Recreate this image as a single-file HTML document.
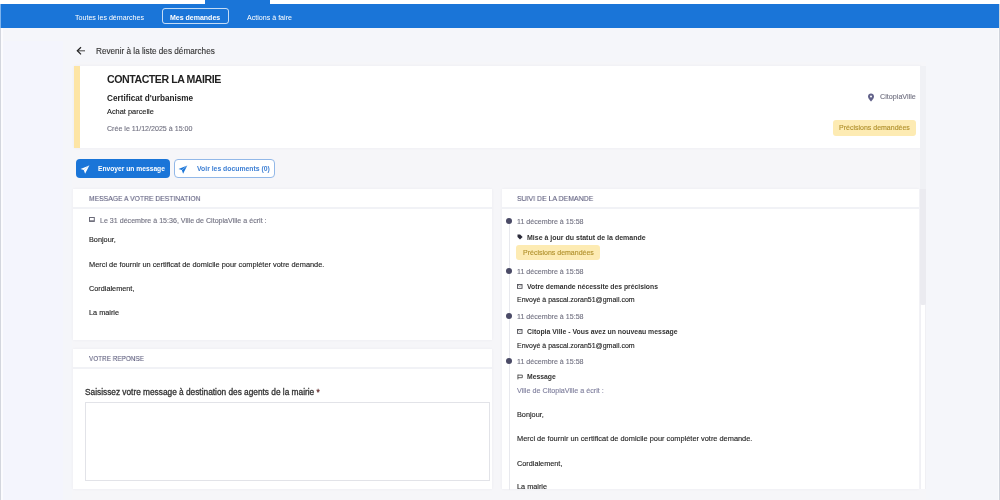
<!DOCTYPE html>
<html><head><meta charset="utf-8">
<style>
*{box-sizing:border-box;margin:0;padding:0}
html,body{width:1000px;height:500px;overflow:hidden}
body{background:#f5f6fa;font-family:"Liberation Sans",sans-serif;color:#222;position:relative}
.a{position:absolute}
.t{position:absolute;white-space:nowrap;line-height:12px;height:12px;will-change:transform;-webkit-text-stroke:.12px currentColor}
.b{font-weight:bold;-webkit-text-stroke:0}
.ns{-webkit-text-stroke:0}
#topstrip{left:0;top:0;width:1000px;height:4px;background:#fff}
#toptab{left:205px;top:0;width:65px;height:4px;background:#1a75d8}
#nav{left:0;top:4px;width:999px;height:24px;background:#1a75d8}
#rb{left:999px;top:4px;width:1px;height:496px;background:#cfd3db}
#rb2{}
.card{position:absolute;background:#fff;box-shadow:0 0 3px rgba(40,40,90,.05)}
.hd{position:absolute;left:0;right:0;top:0;height:20px;border-bottom:2px solid #f1f2f6}
.muted{color:#727282}
.sec{color:#5e5e7e}
.dot{left:506px;width:6px;height:6px;border-radius:50%;background:#4a4a66}
</style></head><body>
<div class="a" id="topstrip"></div>
<div class="a" id="toptab"></div>
<div class="a" id="nav"></div>
<div class="a" style="left:0;top:4px;width:1px;height:496px;background:#d3d6de"></div>
<div class="a" style="left:0;top:4px;width:1px;height:24px;background:#7fb4ee"></div>
<div class="a" style="left:1px;top:28px;width:2px;height:472px;background:#fbfbfe"></div>
<div class="a" style="left:998px;top:28px;width:1px;height:472px;background:#fafbfd"></div>
<div class="a" id="rb"></div>
<div class="a" style="left:72px;top:62px;width:854px;height:438px;background:#f6f6f9"></div>
<div class="a" style="left:3px;top:41px;width:60px;height:459px;background:#f4f5fd"></div>

<!-- nav -->
<div class="t ns" style="left:75px;top:12px;color:#fff;font-size:7.1px">Toutes les démarches</div>
<div class="a" style="left:162px;top:8px;width:67px;height:16px;border:1px solid rgba(255,255,255,.75);border-radius:3px"></div>
<div class="t b" style="left:170px;top:12px;color:#fff;font-size:7px">Mes demandes</div>
<div class="t ns" style="left:247px;top:12px;color:#fff;font-size:7.1px">Actions à faire</div>

<!-- back link -->
<svg class="a" style="left:76px;top:46px" width="10" height="10" viewBox="0 0 10 10"><path d="M9 4.8H1.8" fill="none" stroke="#555" stroke-width="1.1"/><path d="M5 1.2L1.3 4.8 5 8.4" fill="none" stroke="#222" stroke-width="1.2"/></svg>
<div class="t" style="left:96px;top:46.2px;color:#333;font-size:8.2px">Revenir à la liste des démarches</div>

<!-- header card -->
<div class="card" style="left:74px;top:66px;width:847px;height:82px;border-left:6px solid #fde5a5"></div>
<div class="t b" style="left:107px;top:73px;font-size:10.6px;letter-spacing:-.45px">CONTACTER LA MAIRIE</div>
<div class="t b" style="left:107px;top:92.7px;font-size:8.2px">Certificat d'urbanisme</div>
<div class="t" style="left:107px;top:105.7px;font-size:7.4px">Achat parcelle</div>
<div class="t muted" style="left:107px;top:123px;font-size:7.1px">Crée le 11/12/2025 à 15:00</div>
<svg class="a" style="left:867px;top:93px" width="8" height="9" viewBox="0 0 8 9"><path d="M4 .6C2.3.6 1 1.9 1 3.5 1 5.6 4 8.6 4 8.6S7 5.6 7 3.5C7 1.9 5.7.6 4 .6z" fill="#62628a"/><circle cx="4" cy="3.5" r="1" fill="#fff"/></svg>
<div class="t muted" style="left:880px;top:90.5px;font-size:7.2px">CitopiaVille</div>
<div class="a" style="left:833px;top:120px;width:83px;height:15.5px;background:#fdebb3;border-radius:3px"></div>
<div class="t" style="left:839px;top:122.4px;font-size:7px;color:#b0902c">Précisions demandées</div>

<!-- buttons -->
<div class="a" style="left:76px;top:158.5px;width:94px;height:19px;background:#1a75d8;border-radius:4px"></div>
<svg class="a" style="left:79.5px;top:164.5px" width="10" height="9" viewBox="0 0 10 9"><path d="M9.3.4L.5 3.9l3.3 1.2 1.3 3.6z" fill="#fff"/><path d="M9.3.4L3.8 5.1" stroke="#9cc3f0" stroke-width=".5"/></svg>
<div class="t b" style="left:98px;top:162.5px;font-size:6.7px;color:#fff">Envoyer un message</div>
<div class="a" style="left:174px;top:158.5px;width:101px;height:19px;background:#fff;border:1px solid #92b8e8;border-radius:4px"></div>
<svg class="a" style="left:177.5px;top:164.5px" width="10" height="9" viewBox="0 0 10 9"><path d="M9.3.4L.5 3.9l3.3 1.2 1.3 3.6z" fill="#1a75d8"/><path d="M9.3.4L3.8 5.1" stroke="#fff" stroke-width=".4"/></svg>
<div class="t b" style="left:196.5px;top:162.5px;font-size:6.85px;color:#3d7fd4">Voir les documents (0)</div>

<!-- message card -->
<div class="card" style="left:73px;top:189px;width:419px;height:151px"><div class="hd"></div></div>
<div class="t sec" style="left:89px;top:192.7px;font-size:8px;transform:scaleX(.848);transform-origin:0 0">MESSAGE A VOTRE DESTINATION</div>
<div class="t muted" style="left:99.5px;top:215px;font-size:7.1px">Le 31 décembre à 15:36, Ville de CitopiaVille a écrit :</div>
<div class="t" style="left:89px;top:233.5px;font-size:7.3px">Bonjour,</div>
<div class="t" style="left:89px;top:258.5px;font-size:7.4px">Merci de fournir un certificat de domicile pour compléter votre demande.</div>
<div class="t" style="left:89px;top:283px;font-size:7.3px">Cordialement,</div>
<div class="t" style="left:89px;top:307px;font-size:7.3px">La mairie</div>

<!-- reponse card -->
<div class="card" style="left:73px;top:349px;width:419px;height:140px"><div class="hd" style="height:20px"></div></div>
<div class="t sec" style="left:89px;top:353.2px;font-size:7.8px;transform:scaleX(.818);transform-origin:0 0">VOTRE REPONSE</div>
<div class="t" style="left:85px;top:386px;font-size:8.3px;color:#333;-webkit-text-stroke:.3px #333">Saisissez votre message à destination des agents de la mairie <span style="color:#d33">*</span></div>
<div class="a" style="left:85px;top:402px;width:405px;height:79px;border:1px solid #e2e3e8"></div>

<!-- suivi card -->
<div class="card" style="left:502px;top:189px;width:417px;height:300px"><div class="hd"></div></div>
<div class="a" style="left:920px;top:66px;width:6px;height:123px;background:#f0f1f5"></div>
<div class="a" style="left:919.5px;top:189px;width:6px;height:300px;background:#fff;border-left:1px solid #f0f0f4;border-right:1px solid #f0f0f4"></div>
<div class="a" style="left:919.5px;top:189px;width:6.5px;height:116px;background:#ebebf0;border-radius:0 0 2px 2px"></div>
<div class="t sec" style="left:516.5px;top:192.7px;font-size:8px;transform:scaleX(.866);transform-origin:0 0">SUIVI DE LA DEMANDE</div>
<div class="a" style="left:508.5px;top:222px;width:1px;height:268px;background:#e8e9ee"></div>

<!-- timeline -->
<div class="a dot" style="top:218px"></div>
<div class="t muted" style="left:517px;top:215.5px;font-size:7.1px">11 décembre à 15:58</div>
<svg class="a" style="left:516.5px;top:234px" width="6" height="6" viewBox="0 0 6 6"><path d="M.5.5h2.6L5.6 3 3 5.6.5 3.1z" fill="#2b2b3a"/></svg>
<div class="t b" style="left:527px;top:231.5px;font-size:7px;color:#333">Mise à jour du statut de la demande</div>
<div class="a" style="left:516px;top:245px;width:84px;height:14.5px;background:#fdebb3;border-radius:3px"></div>
<div class="t" style="left:523px;top:247px;font-size:7px;color:#b0902c">Précisions demandées</div>

<div class="a dot" style="top:267.7px"></div>
<div class="t muted" style="left:517px;top:266.1px;font-size:7.1px">11 décembre à 15:58</div>
<svg class="a" style="left:516.6px;top:284.1px" width="6" height="5" viewBox="0 0 6 5"><rect x=".45" y=".45" width="4.6" height="3.9" fill="none" stroke="#505058" stroke-width=".9"/><path d="M.7 1.1L2.75 2.4 4.8 1.1" fill="none" stroke="#666" stroke-width=".6"/></svg>
<div class="t b" style="left:527px;top:281px;font-size:6.8px;color:#333">Votre demande nécessite des précisions</div>
<div class="t" style="left:517px;top:293.5px;font-size:7px;color:#222">Envoyé à pascal.zoran51@gmail.com</div>

<div class="a dot" style="top:313.2px"></div>
<div class="t muted" style="left:517px;top:311px;font-size:7.1px">11 décembre à 15:58</div>
<svg class="a" style="left:516.6px;top:328.9px" width="6" height="5" viewBox="0 0 6 5"><rect x=".45" y=".45" width="4.6" height="3.9" fill="none" stroke="#505058" stroke-width=".9"/><path d="M.7 1.1L2.75 2.4 4.8 1.1" fill="none" stroke="#666" stroke-width=".6"/></svg>
<div class="t b" style="left:527px;top:326px;font-size:6.9px;color:#333">Citopia Ville - Vous avez un nouveau message</div>
<div class="t" style="left:517px;top:339.5px;font-size:7px;color:#222">Envoyé à pascal.zoran51@gmail.com</div>

<div class="a dot" style="top:358.3px"></div>
<div class="t muted" style="left:517px;top:356.4px;font-size:7.1px">11 décembre à 15:58</div>
<svg class="a" style="left:516.5px;top:373.5px" width="6" height="6" viewBox="0 0 6 6"><path d="M.9 .6v4.8M.9 1.1h4.4v2.6H.9" fill="none" stroke="#444" stroke-width=".85"/></svg>
<div class="t b" style="left:527px;top:371px;font-size:6.8px;color:#333">Message</div>
<div class="t" style="left:517px;top:384.7px;font-size:7.2px;color:#7e7e9c">Ville de CitopiaVille a écrit :</div>
<div class="t" style="left:517px;top:408.5px;font-size:7.3px">Bonjour,</div>
<div class="t" style="left:517px;top:432.5px;font-size:7.4px">Merci de fournir un certificat de domicile pour compléter votre demande.</div>
<div class="t" style="left:517px;top:457.5px;font-size:7.3px">Cordialement,</div>
<div class="a" style="left:502px;top:474px;width:417px;height:15px;overflow:hidden"><div class="t" style="left:15px;top:7px;font-size:7.3px">La mairie</div></div>

<!-- chat icon left -->
<svg class="a" style="left:89px;top:217.2px" width="6" height="5" viewBox="0 0 6 5"><rect x=".5" y=".5" width="4.8" height="3.9" fill="none" stroke="#6a6a78" stroke-width="1"/><path d="M.5 3.9h4.8" stroke="#6a6a78" stroke-width="1.1"/></svg>
</body></html>
